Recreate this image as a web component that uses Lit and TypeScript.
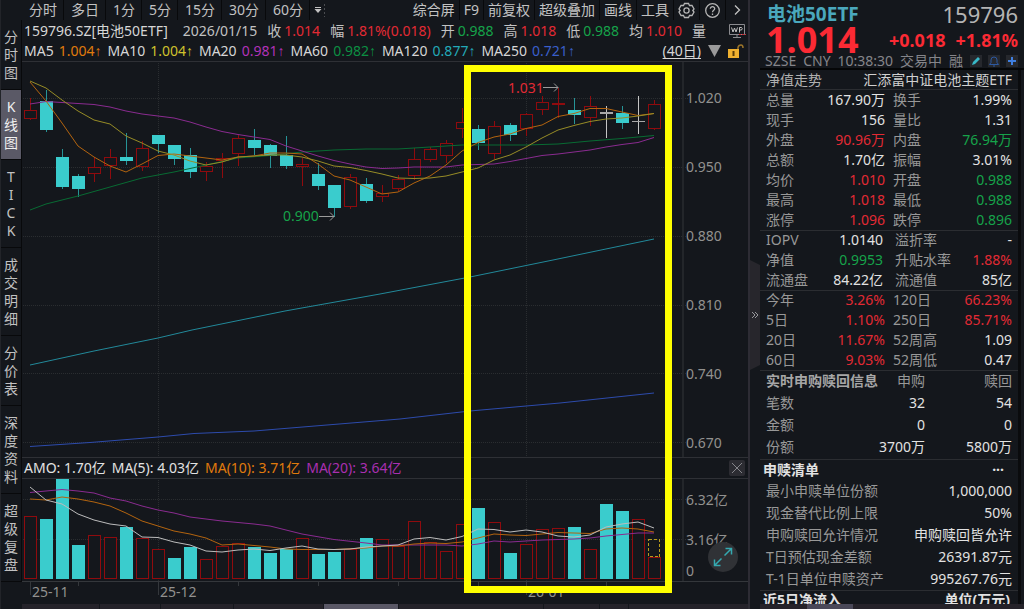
import { LitElement, html, svg, css } from "lit";
import { customElement } from "lit/decorators.js";
import { classMap } from "lit/directives/class-map.js";

type Tone = "up" | "down" | "plain";
type Candle = [kind: "r" | "t" | "w", top: number, bottom: number, high: number, low: number, volumeTop: number];
type Pair = [label: string, value: string, tone: Tone];

const START = 30;
const STEP = 16;

const CANDLES: Candle[] = [
  ["r", 110, 119, 98, 119, 516], ["t", 101, 130, 90, 131, 519], ["t", 157, 187, 149, 188, 479],
  ["t", 176, 189, 174, 196, 545], ["r", 167, 174, 157, 181, 535], ["r", 157, 166, 149, 178, 537],
  ["t", 157, 161, 133, 164, 527], ["r", 148, 167, 141, 170, 538], ["t", 135, 144, 135, 152, 549],
  ["t", 145, 159, 145, 164, 558], ["t", 155, 172, 148, 177, 547], ["r", 166, 172, 162, 180, 559],
  ["r", 158, 161, 153, 177, 546], ["r", 138, 154, 135, 165, 543], ["t", 140, 148, 129, 154, 547],
  ["t", 145, 156, 144, 167, 553], ["t", 155, 166, 136, 168, 549], ["r", 164, 167, 158, 185, 538],
  ["t", 174, 186, 163, 189, 554], ["t", 185, 208, 185, 216, 552], ["r", 177, 207, 174, 208, 549],
  ["t", 184, 201, 178, 202, 538], ["r", 193, 197, 185, 201, 539], ["r", 179, 189, 175, 190, 546],
  ["r", 159, 176, 148, 179, 521], ["r", 149, 160, 147, 161, 542], ["r", 143, 156, 140, 162, 551],
  ["r", 122, 129, 108, 137, 524], ["t", 129, 143, 125, 149, 508], ["r", 126, 154, 121, 158, 522],
  ["t", 125, 135, 123, 140, 553], ["r", 114, 129, 113, 135, 544], ["r", 102, 110, 96, 114, 529],
  ["r", 103, 105, 88, 117, 528], ["t", 110, 115, 98, 123, 527], ["r", 106, 118, 96, 125, 549],
  ["w", 112, 114, 106, 137, 504], ["t", 113, 123, 106, 128, 511], ["w", 121, 122, 96, 133, 519],
  ["r", 104, 129, 100, 129, 557],
];
const RED_VOLUME = new Set([0, 4, 5, 7, 8, 11, 12, 13, 17, 20, 22, 23, 24, 25, 26, 27, 29, 31, 32, 33, 35, 38, 39]);

const PRICE_LINES: [string, string][] = [
  ["ma60", "30,210 46,204 78,196 110,187 142,178 174,172 206,165 238,158 270,155.5 302,152 334,150 366,149 398,149 430,147 462,145 526,145 558,144 590,141 622,138.5 654,135.5"],
  ["ma20", "30,104 46,101.5 62,102.5 78,103.5 94,104.5 110,107 126,111 142,114 158,116 174,118 190,122 206,127 222,131.5 238,134.5 254,137 270,139.5 286,146 302,151 318,156 334,160.5 350,164 366,167 382,168.5 398,168 414,167 446,167 462,165 478,164.5 494,164 510,161.5 526,158.5 542,155.5 558,154 574,152 590,150 606,147 622,144.5 638,142.5 654,137.5"],
  ["ma5", "30,82 46,101 62,123 78,146 94,157 110,166 126,172 142,164 158,155.5 174,154 190,156 206,158 222,160 238,157 254,156 270,153 286,153 302,154 318,164 334,176 350,180 366,187 382,194 398,192 414,183 430,176 446,165 462,151 478,142.5 494,137 510,134 526,128.5 542,125 558,116.5 574,113.5 590,108.5 606,108.5 622,112 638,115.5 654,113.5"],
  ["ma10", "30,81 46,88 62,100 78,111 94,120 110,124 126,136 142,143 158,151 174,155 190,161 206,165 222,162 238,157 254,156 270,155 286,155 302,157 318,161 334,166 350,167.5 366,170.5 382,174 398,178 414,178.5 430,178 446,176 462,172 478,168 494,160 510,155 526,147 542,138 558,130 574,125.5 590,121.5 606,119 622,118 638,116 654,113.5"],
  ["ma120", "30,365 94,351 158,338 192,330 285,311 380,294 470,277 553,260 654,239"],
  ["ma250", "30,446.5 90,442.5 158,437 194,433.5 254,431 400,419 470,411 560,403 654,393"],
];
const VOLUME_LINES: [string, string][] = [
  ["ma20", "30,492.5 46,491 62,489.5 78,491 94,493 110,498 126,501 142,506 158,510 174,513 190,517 206,519 222,521 254,524 270,526 302,534 334,539.5 366,543 382,545 446,545 462,546 478,544 494,541 510,542 526,541 542,540 574,539 590,538 606,536 622,534.5 638,533 654,533"],
  ["ma5", "30,499 46,500 62,497 78,499 94,502 110,506 126,513 142,521 158,526 174,531 190,534 206,538 222,545 238,544 254,545.5 270,547 286,549 302,549.5 334,549.5 366,548 382,546 398,546 414,544 430,543 446,543.5 462,542 478,538 494,534 510,535 526,535.5 542,534 558,532.5 574,533 590,533.5 606,529 622,528 638,529 654,532"],
  ["avg", "30,487 46,500 62,504 78,514 94,520 110,524 126,526 142,537 158,537.5 174,542 190,545 206,551 222,552 238,550 254,549 270,550.5 286,548 302,546 318,549 334,549.5 350,549 366,547 382,546 398,545 414,539 430,537.5 446,540 462,536.5 478,529 494,529.5 510,532 526,530 542,532 558,536 574,537 590,535 606,527 622,524 638,522 654,528"],
];

const sharedStyles = css`
  * { box-sizing: border-box; }
  button { font: inherit; color: inherit; background: none; border: 0; margin: 0; padding: 0; cursor: pointer; }
  svg { display: block; }
  .up { color: #e32a34; }
  .down { color: #16a34a; }
  .plain { color: #e2e2e2; }
`;

@customElement("stock-chart")
export class StockChart extends LitElement {
  static styles = [sharedStyles, css`
    :host { display: block; position: relative; }
    .plot { width: 100%; height: auto; font-size: 14px; }
    .grid { stroke: #2a2d30; stroke-width: 1; stroke-dasharray: 1 1; }
    .axis { fill: #23262a; }
    .rule { fill: #34373b; }
    .label { fill: #92918f; }
    .line { fill: none; stroke-width: 1; }
    .ma5 { stroke: #b3640f; }
    .ma10 { stroke: #978c26; }
    .ma20 { stroke: #8a2b90; }
    .ma60 { stroke: #086b33; }
    .ma120 { stroke: #22899a; }
    .ma250 { stroke: #2d4bac; }
    .avg { stroke: #bcbcbc; }
    .shape { shape-rendering: crispEdges; }
    .t { fill: #3acccd; }
    .r { fill: #14171c; stroke: #8f0b0e; stroke-width: 1; }
    .w { fill: #a8a8a8; }
    .wick-t { fill: #269497; }
    .wick-r { fill: #8f0b0e; }
    .wick-w { fill: #c4c4c4; }
    .high { fill: #e32a34; }
    .low { fill: #16a34a; }
    .arrow { fill: none; stroke: #9b9b9b; stroke-width: 1; }
    .estimate { fill: none; stroke: #b89b1c; stroke-width: 1; stroke-dasharray: 3 2; }
    .caption { display: flex; align-items: center; gap: 6px; height: 22px; padding: 0 3px 0 2px; border: solid #2e3035; border-width: 1px 0; color: #e2e2e2; white-space: nowrap; }
    .orange { color: #e07b0c; }
    .purple { color: #a92fb0; }
    .close { width: 16px; height: 16px; margin-left: auto; background: #2c2c32; border-radius: 2px; }
    .marker { position: absolute; left: 442px; right: 76px; top: 3px; bottom: 11px; border: 7px solid #ffff00; pointer-events: none; }
    .expand { position: absolute; right: 10px; bottom: 32px; width: 30px; height: 30px; border-radius: 50%; background: #303236; }
  `];

  private renderCandle([kind, top, bottom, high, low]: Candle, i: number) {
    const x = START + i * STEP;
    const body = kind === "r"
      ? svg`<rect class="r" x=${x - 5.5} y=${top + 0.5} width="12" height=${Math.max(bottom - top - 1, 1)}></rect>`
      : svg`<rect class=${kind} x=${x - 6} y=${top} width="13" height=${bottom - top}></rect>`;
    return svg`<rect class="wick-${kind}" x=${x} y=${high} width="1" height=${low - high + 1}></rect>${body}`;
  }

  private renderVolume(candle: Candle, i: number) {
    const x = START + i * STEP;
    const top = candle[5];
    return RED_VOLUME.has(i)
      ? svg`<rect class="r" x=${x - 5.5} y=${top + 0.5} width="12" height=${578 - top}></rect>`
      : svg`<rect class="t" x=${x - 6} y=${top} width="13" height=${579 - top}></rect>`;
  }

  private renderLines(lines: [string, string][]) {
    return lines.map(([name, points]) => svg`<polyline class="line ${name}" points=${points}></polyline>`);
  }

  render() {
    return html`
      <svg class="plot" viewBox="22 62 726 395" role="img" aria-label="日K线">
        ${[98, 167, 236, 305, 373, 442].map((y) => svg`<path class="grid" d="M23 ${y + 0.5}H688"></path>`)}
        ${[158, 526].map((x) => svg`<path class="grid" d="M${x + 0.5} 63V457"></path>`)}
        <rect class="axis" x="682" y="62" width="2" height="395"></rect>
        <g class="shape">${CANDLES.map((c, i) => this.renderCandle(c, i))}</g>
        ${this.renderLines(PRICE_LINES)}
        ${["1.020", "0.950", "0.880", "0.810", "0.740", "0.670"].map((t, i) => svg`<text class="label" x="686" y=${103 + i * 69}>${t}</text>`)}
        <text class="high" x="508" y="93">1.031</text>
        <path class="arrow" d="M543 87.500H558M554 83.500L558 87.500L554 91.500"></path>
        <text class="low" x="283" y="221">0.900</text>
        <path class="arrow" d="M319 216.500H334M330 212.500L334 216.500L330 220.500"></path>
      </svg>
      <div class="caption">
        <span>AMO: 1.70亿</span><span>MA(5): 4.03亿</span>
        <span class="orange">MA(10): 3.71亿</span><span class="purple">MA(20): 3.64亿</span>
        <button class="close" aria-label="关闭">
          <svg width="16" height="16" viewBox="0 0 16 16"><path d="M3 3L13 13M13 3L3 13" stroke="#85858a" fill="none"></path></svg>
        </button>
      </div>
      <svg class="plot" viewBox="22 479 726 125" role="img" aria-label="成交额">
        ${[499, 539].map((y) => svg`<path class="grid" d="M23 ${y + 0.5}H688"></path>`)}
        ${[158, 526].map((x) => svg`<path class="grid" d="M${x + 0.5} 480V581"></path>`)}
        <rect class="axis" x="682" y="479" width="2" height="102"></rect>
        <g class="shape">
          ${CANDLES.map((c, i) => this.renderVolume(c, i))}
          <rect class="estimate" x="648.5" y="539.5" width="11" height="17"></rect>
          <rect class="rule" x="22" y="581" width="726" height="1"></rect>
          ${[30, 158, 526].map((x) => svg`<rect class="rule" x=${x} y="582" width="1" height="13"></rect>`)}
          ${[78, 238, 318, 398, 478, 606].map((x) => svg`<rect class="rule" x=${x} y="582" width="1" height="4"></rect>`)}
        </g>
        ${this.renderLines(VOLUME_LINES)}
        <text class="label" x="686" y="505">6.32亿</text>
        <text class="label" x="686" y="545">3.16亿</text>
        <text class="label" x="686" y="576">0</text>
        <text class="label" x="32" y="597">25-11</text>
        <text class="label" x="160" y="597">25-12</text>
        <text class="label" x="528" y="597">26-01</text>
      </svg>
      <button class="expand" aria-label="展开">
        <svg width="30" height="30" viewBox="0 0 30 30"><path d="M16.500 13.500L23 7M17.500 6.500H23.500V12.500M13.500 16.500L7 23M6.500 17.500V23.500H12.500" stroke="#35a9b0" stroke-width="1.500" fill="none"></path></svg>
      </button>
      <div class="marker"></div>
    `;
  }
}

@customElement("quote-panel")
export class QuotePanel extends LitElement {
  static styles = [sharedStyles, css`
    :host { display: flex; height: 100%; min-width: 0; }
    .edge { display: flex; flex: none; flex-direction: column; width: 10px; padding-top: 260px; }
    .collapse { height: 110px; background: #27262c; color: #a0a0a4; clip-path: polygon(0 0, 100% 5px, 100% 105px, 0 100%); }
    .body { flex: 1; min-width: 0; display: flex; flex-direction: column; overflow: hidden; color: #989898; }
    .head { flex: none; height: 70px; padding: 0 6px 0 5px; border-bottom: 2px solid #050607; }
    .row { display: flex; align-items: center; justify-content: space-between; white-space: nowrap; }
    .title { height: 28px; padding-left: 2px; }
    .name { font-size: 19px; font-weight: 700; color: #4aa8bd; }
    .code { font-size: 22px; color: #b4b4b4; }
    .price { height: 24px; padding-left: 1px; font-weight: 700; }
    .last { font-size: 36px; line-height: 24px; color: #fb2a34; }
    .change { display: flex; gap: 10px; font-size: 18px; color: #fb2a34; }
    .meta { height: 18px; color: #85858a; }
    .icons { display: flex; gap: 6px; }
    .tile { background: #26282d; }
    .scroll { flex: 1; min-height: 0; overflow: hidden; margin-right: 3px; border-right: 3px solid #0a0b0d; }
    .box { border-bottom: 1px solid #2b2d31; margin: 0; padding: 0 6px; }
    .fund { height: 20px; color: #b0b0b0; }
    .fundname { color: #d0d0d0; }
    .stats { display: grid; grid-template-columns: 1fr 1fr; column-gap: 8px; grid-auto-rows: 20px; }
    .stats .row { height: 20px; }
    .stats { margin-bottom: -1px; }
    .inset { column-gap: 12px; }
    .list .row { height: 22px; }
    .list { margin-bottom: -1px; }
    dt, dd { margin: 0; }
    table { width: 100%; border-spacing: 0; table-layout: fixed; }
    .ledger { height: 90px; }
    .first { width: 72px; }
    th, td { height: 22px; padding: 0; text-align: right; font-weight: 400; white-space: nowrap; }
    th:first-child { text-align: left; }
    th.strong { font-weight: 700; color: #a6a6a6; }
    .heading { height: 20px; margin: 0; padding: 0 8px 0 3px; font-size: 14px; font-weight: 700; color: #e2e2e2; }
    .more { padding-right: 6px; }
    .track { flex: none; height: 5px; background: #252229; padding-left: 47px; }
    .thumb { width: 46px; height: 5px; background: #4a4858; }
  `];

  private pair([label, value, tone]: Pair) {
    return html`<div class="row"><dt>${label}</dt><dd class=${tone}>${value}</dd></div>`;
  }

  private readonly trade: Pair[] = [
    ["总量", "167.90万", "plain"], ["换手", "1.99%", "plain"],
    ["现手", "156", "plain"], ["量比", "1.31", "plain"],
    ["外盘", "90.96万", "up"], ["内盘", "76.94万", "down"],
    ["总额", "1.70亿", "plain"], ["振幅", "3.01%", "plain"],
    ["均价", "1.010", "up"], ["开盘", "0.988", "down"],
    ["最高", "1.018", "up"], ["最低", "0.988", "down"],
    ["涨停", "1.096", "up"], ["跌停", "0.896", "down"],
  ];
  private readonly value: Pair[] = [
    ["IOPV", "1.0140", "plain"], ["溢折率", "-", "plain"],
    ["净值", "0.9953", "down"], ["升贴水率", "1.88%", "up"],
    ["流通盘", "84.22亿", "plain"], ["流通值", "85亿", "plain"],
  ];
  private readonly returns: Pair[] = [
    ["今年", "3.26%", "up"], ["120日", "66.23%", "up"],
    ["5日", "1.10%", "up"], ["250日", "85.71%", "up"],
    ["20日", "11.67%", "up"], ["52周高", "1.09", "plain"],
    ["60日", "9.03%", "up"], ["52周低", "0.47", "plain"],
  ];
  private readonly basket: Pair[] = [
    ["最小申赎单位份额", "1,000,000", "plain"], ["现金替代比例上限", "50%", "plain"],
    ["申购赎回允许情况", "申购赎回皆允许", "plain"], ["T日预估现金差额", "26391.87元", "plain"],
    ["T-1日单位申赎资产", "995267.76元", "plain"],
  ];

  render() {
    return html`
      <div class="edge"><button class="collapse" aria-label="收起">
        <svg width="10" height="10" viewBox="0 0 10 10"><path d="M2 2L5 5L2 8M5 2L8 5L5 8" stroke="#98989c" fill="none"></path></svg>
      </button></div>
      <div class="body">
        <header class="head">
          <div class="row title"><span class="name">电池50ETF</span><span class="code">159796</span></div>
          <div class="row price"><span class="last">1.014</span><span class="change"><span>+0.018</span><span>+1.81%</span></span></div>
          <div class="row meta">
            <span>SZSE</span><span>CNY</span><span>10:38:30</span><span>交易中</span><span>融</span>
            <span class="icons">
              <button class="tile" aria-label="编辑"><svg width="12" height="12" viewBox="0 0 12 12"><path d="M2 10L3 7L8 2L10 4L5 9Z" fill="#38b8c8"></path></svg></button>
              <button class="tile" aria-label="提醒"><svg width="12" height="12" viewBox="0 0 12 12"><path d="M1.500 9.500H10.500L9 7.500V5A3 3 0 0 0 3 5V7.500ZM5 11H7" stroke="#2c58a0" fill="none"></path></svg></button>
              <button class="tile" aria-label="添加"><svg width="12" height="12" viewBox="0 0 12 12"><path d="M6 2V10M2 6H10" stroke="#3f7fe0" stroke-width="2" fill="none"></path></svg></button>
            </span>
          </div>
        </header>
        <div class="scroll">
          <div class="box row fund"><span>净值走势</span><span class="fundname">汇添富中证电池主题ETF</span></div>
          <div class="sections">
            <dl class="box stats">${this.trade.map((p) => this.pair(p))}</dl>
            <dl class="box stats inset">${this.value.map((p) => this.pair(p))}</dl>
            <dl class="box stats">${this.returns.map((p) => this.pair(p))}</dl>
          </div>
          <div class="box ledger">
            <table>
              <colgroup><col class="first"><col><col></colgroup>
              <tr><th class="strong">实时申购赎回信息</th><th>申购</th><th>赎回</th></tr>
              <tr><th>笔数</th><td class="plain">32</td><td class="plain">54</td></tr>
              <tr><th>金额</th><td class="plain">0</td><td class="plain">0</td></tr>
              <tr><th>份额</th><td class="plain">3700万</td><td class="plain">5800万</td></tr>
            </table>
          </div>
          <h2 class="heading row"><span>申赎清单</span><span class="more">···</span></h2>
          <dl class="box list">${this.basket.map((p) => this.pair(p))}</dl>
          <h2 class="heading row"><span>近5日净流入</span><span>单位(万元)</span></h2>
        </div>
        <div class="track"><div class="thumb"></div></div>
      </div>
    `;
  }
}

@customElement("app-root")
export class AppRoot extends LitElement {
  static styles = [sharedStyles, css`
    :host {
      display: grid; grid-template-columns: 22px minmax(0, 1fr) 274px; grid-template-rows: minmax(0, 1fr); height: 100vh; overflow: hidden;
      background: #14171c; color: #c2c2c2;
      font: 14px/18px "Noto Sans", "Noto Sans CJK SC", sans-serif;
    }
    .rail { display: flex; flex-direction: column; padding-top: 20px; border-left: 1px solid #222429; }
    .tab { padding: 8px 0; border-right: 1px solid #08090b; box-shadow: inset 0 -1px #08090b; }
    .tab span { display: block; }
    .active { background: #5a5966; color: #f0f0f0; }
    .main { min-width: 0; border-right: 2px solid #2d2c34; overflow: hidden; }
    .bar, .group, .quote, .averages { display: flex; align-items: center; white-space: nowrap; }
    .bar { justify-content: space-between; height: 20px; }
    .tool { height: 20px; padding: 0 6px 0 7px; border-right: 1px solid #08090b; }
    .tight { padding: 0 4px; }
    .icon { padding: 0 4px; }
    .quote { height: 21px; padding: 0 2px; gap: 10px; }
    .item { display: flex; gap: 3px; }
    .id { margin-right: 5px; color: #d6d6d6; }
    .wp { margin-left: auto; }
    .averages { height: 21px; padding: 0 4px 0 2px; gap: 6px; border-bottom: 1px solid #2e3035; color: #d6d6d6; }
    .value { margin-left: 5px; }
    .tick { font-family: "Liberation Sans", sans-serif; }
    .c5 { color: #e07b0c; }
    .c10 { color: #cfc22c; }
    .c20 { color: #b132b8; }
    .c60 { color: #0c8f43; }
    .c120 { color: #23a9b8; }
    .c250 { color: #3a5fcb; }
    .range { display: flex; align-items: center; gap: 7px; margin-left: auto; }
    .period { text-decoration: underline; text-underline-offset: 2px; }
    .strip { display: grid; grid-template-columns: 78fr 61fr 72fr 90fr 75fr 146fr 55fr 29fr 120fr; gap: 1px; height: 5px; }
    .cell { background: #25232a; }
    .lit { background: #5a5866; }
  `];

  render() {
    const tabs = ["分时图", "K线图", "TICK", "成交明细", "分价表", "深度资料", "超级复盘"];
    const quotes: [string, string, Tone][] = [
      ["收", "1.014", "up"], ["幅", "1.81%(0.018)", "up"], ["开", "0.988", "down"],
      ["高", "1.018", "up"], ["低", "0.988", "down"], ["均", "1.010", "up"], ["量", "", "plain"],
    ];
    const averages = [["5", "1.004"], ["10", "1.004"], ["20", "0.981"], ["60", "0.982"], ["120", "0.877"], ["250", "0.721"]];
    return html`
      <nav class="rail">
        ${tabs.map((t) => html`<button class=${classMap({ tab: true, active: t === "K线图" })} aria-label=${t}>${[...t].map((c) => html`<span>${c}</span>`)}</button>`)}
      </nav>
      <main class="main">
        <div class="bar">
          <div class="group">
            ${["分时", "多日", "1分", "5分", "15分", "30分", "60分"].map((t) => html`<button class="tool">${t}</button>`)}
            <button class="icon" aria-label="更多周期"><svg width="14" height="14" viewBox="0 0 14 14"><path d="M1 4.500H7" stroke="#c2c2c2"></path><path d="M0.500 6H7.500L4 10Z" fill="#c2c2c2"></path><path d="M10.500 1V14" stroke="#4a4c50" stroke-dasharray="2 2"></path></svg></button>
          </div>
          <div class="group">
            ${["综合屏", "F9", "前复权", "超级叠加", "画线", "工具"].map((t) => html`<button class="tool tight">${t}</button>`)}
            <button class="tool icon" aria-label="设置"><svg width="17" height="17" viewBox="0 0 17 17" fill="none" stroke="#b4b4b4" stroke-width="1.300"><path d="M6.500 1.500H10.500L11.500 3.500L14 3.500L16 7L14.800 8.500L16 10L14 13.500H11.500L10.500 15.500H6.500L5.500 13.500H3L1 10L2.200 8.500L1 7L3 3.500H5.500Z"></path><circle cx="8.500" cy="8.500" r="2.600"></circle></svg></button>
            <button class="tool icon" aria-label="帮助"><svg width="17" height="17" viewBox="0 0 17 17" fill="none" stroke="#b4b4b4" stroke-width="1.300"><circle cx="8.500" cy="8.500" r="6.800"></circle><path d="M6.300 6.800C6.300 3.800 10.800 4 10.700 6.700C10.600 8.300 8.500 8.300 8.500 10.300M8.500 11.500V13"></path></svg></button>
            <button class="icon" aria-label="展开工具栏"><svg width="14" height="14" viewBox="0 0 14 14"><path d="M5 2.500L9.500 7L5 11.500" stroke="#c2c2c2" stroke-width="1.300" fill="none"></path></svg></button>
          </div>
        </div>
        <div class="quote">
          <span class="id">159796.SZ[电池50ETF]</span><span>2026/01/15</span>
          ${quotes.map(([k, v, tone]) => html`<span class="item"><span>${k}</span><span class=${tone}>${v}</span></span>`)}
          <svg class="wp" width="18" height="16" viewBox="0 0 18 16"><path d="M1.500 1.500H16.500V11.500H1.500ZM9 12V14M5 14.500H13" stroke="#8a8a8e" fill="none"></path><path d="M3.500 4.500L5 9L6.500 5L8 9L9.500 4.500M11.500 9.500V4.500H13.500Q15 5.500 13.500 7H11.500" stroke="#c0c0c0" fill="none"></path><path d="M11 11.500H18" stroke="#d02830" stroke-dasharray="2 1"></path></svg>
        </div>
        <div class="averages">
          ${averages.map(([n, v]) => html`<span>MA${n}<span class="value c${n}">${v}<span class="tick">↑</span></span></span>`)}
          <span class="range">
            <button class="period">(40日)</button>
            <svg width="13" height="12" viewBox="0 0 13 12"><path d="M0 0H13L6.500 12Z" fill="#9a9a9a"></path></svg>
            <svg width="16" height="14" viewBox="0 0 16 14"><path d="M10 6V3.500Q10.500 1 13 1Q15 1 15 4" stroke="#9a742a" stroke-width="1.500" fill="none"></path><rect x="0" y="5" width="11" height="9" fill="#efb02f"></rect><path d="M5.500 7V12" stroke="#5a3d08" stroke-width="2"></path></svg>
          </span>
        </div>
        <stock-chart></stock-chart>
        <div class="strip">${[0, 1, 2, 3, 4, 5, 6, 7, 8].map((i) => html`<div class=${classMap({ cell: true, lit: i === 4 })}></div>`)}</div>
      </main>
      <quote-panel></quote-panel>
    `;
  }
}
